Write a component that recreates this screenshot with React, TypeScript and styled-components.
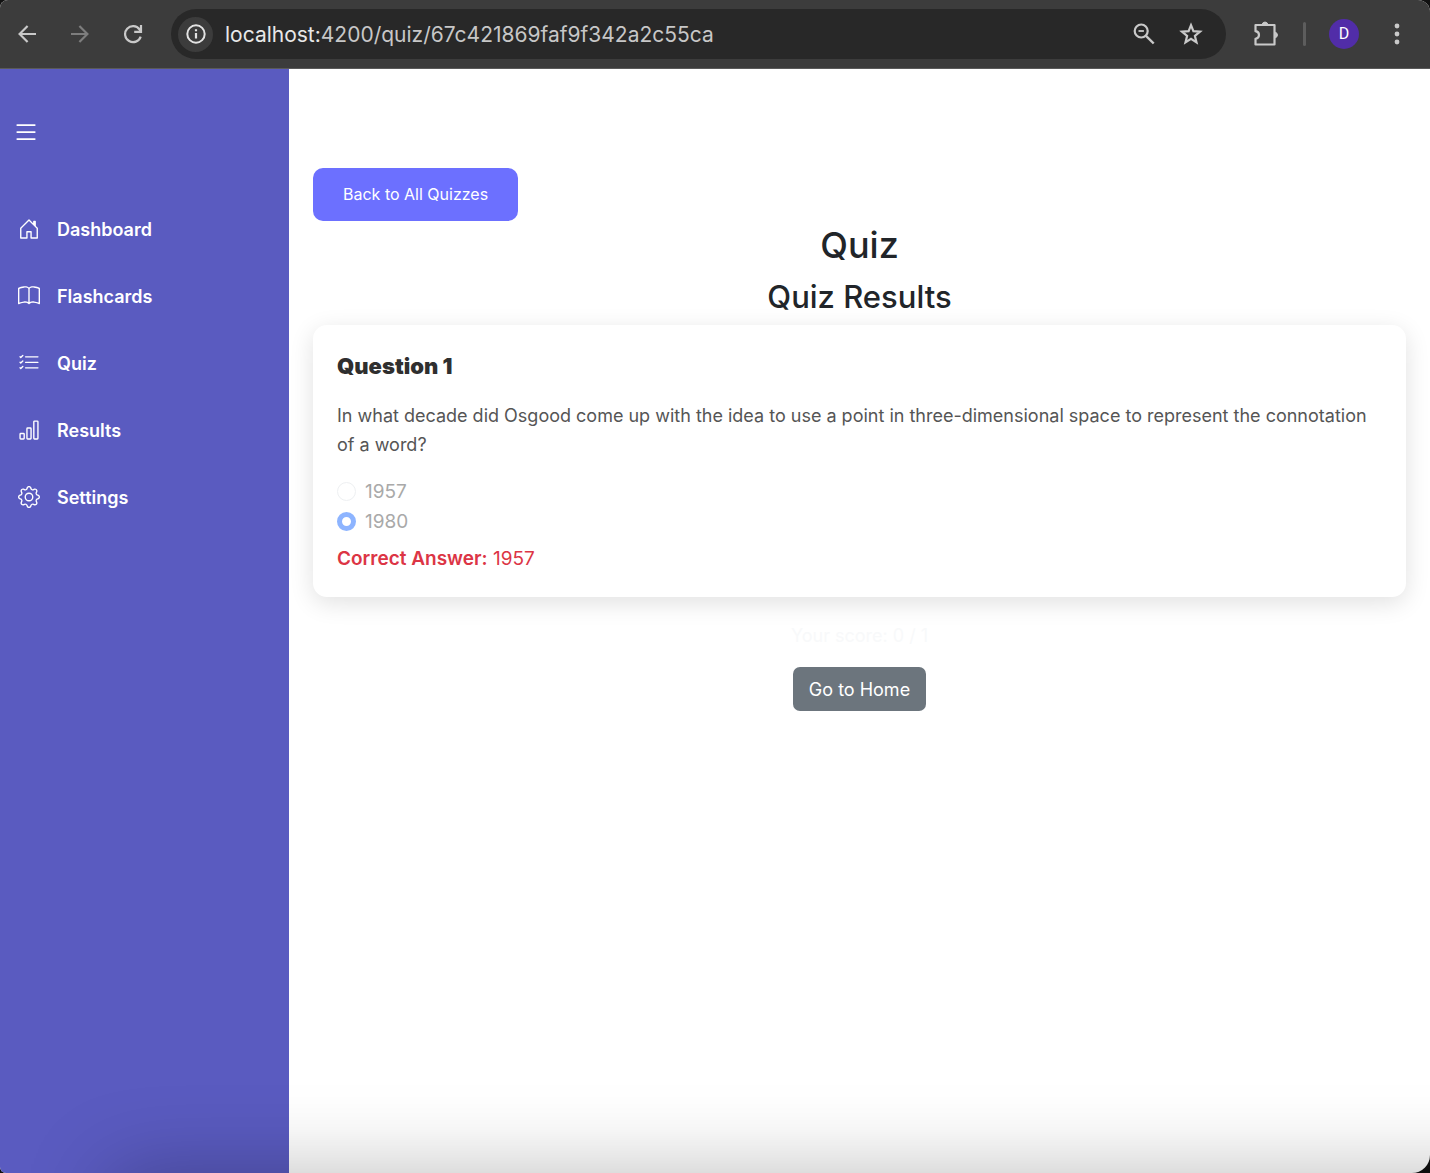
import React from "react";
import styled, { createGlobalStyle } from "styled-components";
import { BsBarChart, BsBook, BsGear, BsHouseDoor, BsList, BsListCheck } from "react-icons/bs";

const GlobalStyle = createGlobalStyle`
  *, *::before, *::after { box-sizing: border-box; }
  body {
    margin: 0;
    background: #111;
    color: #212529;
    font-family: Inter, "Liberation Sans", sans-serif;
    font-size: 18px;
    line-height: 29px;
  }
  h1, h2, h3, p { margin: 0; }
  button, input { font: inherit; }
`;

const Window = styled.div`
  display: flex;
  flex-direction: column;
  min-height: 100vh;
  overflow: hidden;
  border-radius: 8px 12px 18px 6px;
  background: #fff;
`;

const Toolbar = styled.header`
  display: flex;
  align-items: center;
  height: 69px;
  padding: 0 17px 0 11px;
  background: #3c3c3c;
  border-bottom: 1px solid #5a5a5a;
`;

const ToolButton = styled.button<{ $dim?: boolean }>`
  display: grid;
  place-items: center;
  flex: none;
  width: 32px;
  height: 32px;
  padding: 0;
  border: 0;
  background: none;
  color: ${(p) => (p.$dim ? "#7d7d7d" : "#c9c9c9")};
`;

const History = styled.div`
  display: flex;
  gap: 21px;
  margin-right: 22px;
`;

const AddressBar = styled.div`
  display: flex;
  flex: 1;
  align-items: center;
  gap: 12px;
  height: 50px;
  padding: 0 19px 0 7px;
  border-radius: 25px;
  background: #282828;
`;

const SiteInfo = styled(ToolButton)`
  width: 35px;
  height: 35px;
  border-radius: 50%;
  background: #3c3c3c;
  color: #e3e3e3;
`;

const Url = styled.div`
  flex: 1;
  color: #c7c7c7;
  font-size: 21px;
  white-space: nowrap;

  b {
    color: #e8e8e8;
    font-weight: 400;
  }
`;

const AddressActions = styled.div`
  display: flex;
  gap: 15px;
`;

const BrowserActions = styled.div`
  display: flex;
  align-items: center;
  margin-left: 23px;
`;

const Divider = styled.span`
  width: 3px;
  height: 24px;
  margin: 0 23px 0 22px;
  border-radius: 2px;
  background: #5d5d5d;
`;

const Avatar = styled.button`
  width: 30px;
  height: 30px;
  margin-right: 22px;
  padding: 0;
  border: 0;
  border-radius: 50%;
  background: #512da8;
  color: #fff;
  font-family: Roboto, sans-serif;
  font-size: 16px;
  line-height: 30px;
`;

const Body = styled.div`
  display: flex;
  flex: 1;
`;

const Sidebar = styled.aside`
  flex: none;
  width: 289px;
  padding: 49px 12px;
  background: #5a5bc0;
  color: #fff;
`;

const MenuButton = styled.button`
  display: block;
  height: 28px;
  padding: 0;
  border: 0;
  background: none;
  color: inherit;
`;

const NavList = styled.nav`
  display: flex;
  flex-direction: column;
  gap: 19px;
  margin-top: 59px;
`;

const NavItem = styled.a`
  display: flex;
  align-items: center;
  gap: 17px;
  height: 48px;
  padding-left: 6px;
  color: inherit;
  font-weight: 600;
  text-decoration: none;
`;

const Main = styled.main`
  display: flex;
  flex: 1;
  flex-direction: column;
  align-items: center;
  padding: 99px 24px 24px;
`;

const BackButton = styled.button`
  align-self: flex-start;
  height: 53px;
  padding: 0 30px;
  border: 0;
  border-radius: 10px;
  background: #6c70ff;
  color: #fff;
  font-size: 16px;
`;

const Title = styled.h1`
  margin-top: 1px;
  font-size: 36px;
  font-weight: 500;
  line-height: 46px;
`;

const Subtitle = styled.h2`
  margin-top: 9px;
  font-size: 31px;
  font-weight: 500;
  line-height: 40px;
`;

const Card = styled.section`
  width: 100%;
  margin-top: 8px;
  padding: 24px;
  border-radius: 14px;
  background: #fff;
  box-shadow: 0 6px 24px rgba(0, 0, 0, 0.12);
`;

const CardTitle = styled.h3`
  margin-top: 1px;
  color: #2f2f2f;
  font-size: 22px;
  font-weight: 900;
  line-height: 32px;
`;

const Question = styled.p`
  margin: 19px 0 17px;
  color: #555;
`;

const Options = styled.div`
  display: flex;
  flex-direction: column;
`;

const OptionRow = styled.div`
  display: flex;
  align-items: center;
  gap: 9px;
  height: 30px;
  color: #a9a9a9;
  font-size: 19px;
`;

const Radio = styled.input`
  appearance: none;
  width: 19px;
  height: 19px;
  margin: 0;
  border: 1px solid #dee2e6;
  border-radius: 50%;
  background: #fff;
  opacity: 0.5;

  &:checked {
    border: 5px solid #1d6cff;
  }
`;

const CorrectAnswer = styled.p`
  margin-top: 8px;
  color: #dc3545;
  font-size: 19px;

  strong { font-weight: 600; }
`;

const Score = styled.p`
  margin-top: 24px;
  color: #f8f9fa;
`;

const HomeButton = styled.button`
  height: 44px;
  margin-top: 17px;
  padding: 0 16px;
  border: 0;
  border-radius: 7px;
  background: #6c757d;
  color: #fff;
`;

const BottomShade = styled.div`
  position: fixed;
  top: 100%;
  right: -200px;
  left: 110px;
  height: 200px;
  box-shadow: 0 0 84px rgba(0, 0, 0, 0.27);
  pointer-events: none;
`;

const stroke = {
  fill: "none",
  stroke: "currentColor",
  strokeWidth: 2.2,
} as const;

const BackIcon = () => (
  <svg width="18" height="18" viewBox="0 0 18 18" {...stroke}>
    <path d="M18 9H1.8M9.6 1 1.6 9l8 8" />
  </svg>
);

const ForwardIcon = () => (
  <svg width="18" height="18" viewBox="0 0 18 18" {...stroke}>
    <path d="M0 9h16.2M8.4 1l8 8-8 8" />
  </svg>
);

const ReloadIcon = () => (
  <svg width="20" height="20" viewBox="0 0 20 20" {...stroke}>
    <path d="M17.7 12.6A8 8 0 1 1 16.6 5.500L18 7.200M18 1v6.800h-6.800" />
  </svg>
);

const InfoIcon = () => (
  <svg width="20" height="20" viewBox="0 0 20 20" {...stroke}>
    <circle cx="10" cy="10" r="8.700" strokeWidth="2" />
    <path d="M10 9v5.600M10 5.200v2.100" />
  </svg>
);

const ZoomOutIcon = () => (
  <svg width="22" height="22" viewBox="0 0 22 22" {...stroke}>
    <circle cx="8.200" cy="8" r="6.500" />
    <path d="M13 12.800 20.700 20.500" strokeWidth="2.400" />
    <path d="M5.500 8h5.400" strokeWidth="1.800" />
  </svg>
);

const StarIcon = () => (
  <svg width="24" height="24" viewBox="0 0 24 24" {...stroke}>
    <path d="m12 3.200 2.400 6 6.600.5-5.100 4.200 1.600 6.500L12 16.900l-5.500 3.500 1.600-6.500L3 9.700l6.600-.5z" />
  </svg>
);

const PuzzleIcon = () => (
  <svg width="26" height="26" viewBox="0 0 26 26" {...stroke} strokeLinejoin="round">
    <path d="M3.500 4h19v19.500h-19v-5.700c2.200-.4 3.500-1.800 3.500-3.800s-1.300-3.400-3.500-3.800z" />
    <path d="M10.200 3.200a2.900 2.900 0 0 1 5.600 0zM23.300 11.200a2.900 2.900 0 0 1 0 5.600z" fill="currentColor" strokeWidth="1" />
  </svg>
);

const MoreIcon = () => (
  <svg width="6" height="22" viewBox="0 0 6 22" fill="currentColor">
    <circle cx="3" cy="3" r="2.400" />
    <circle cx="3" cy="11" r="2.400" />
    <circle cx="3" cy="19" r="2.400" />
  </svg>
);

const navItems = [
  { label: "Dashboard", Icon: BsHouseDoor },
  { label: "Flashcards", Icon: BsBook },
  { label: "Quiz", Icon: BsListCheck },
  { label: "Results", Icon: BsBarChart },
  { label: "Settings", Icon: BsGear },
];

const answers = ["1957", "1980"];

export default function App() {
  return (
    <>
      <GlobalStyle />
      <Window>
        <Toolbar>
          <History>
            <ToolButton aria-label="Back"><BackIcon /></ToolButton>
            <ToolButton aria-label="Forward" $dim><ForwardIcon /></ToolButton>
            <ToolButton aria-label="Reload"><ReloadIcon /></ToolButton>
          </History>
          <AddressBar>
            <SiteInfo aria-label="Site information"><InfoIcon /></SiteInfo>
            <Url><b>localhost:</b>4200/quiz/67c421869faf9f342a2c55ca</Url>
            <AddressActions>
              <ToolButton aria-label="Zoom"><ZoomOutIcon /></ToolButton>
              <ToolButton aria-label="Bookmark"><StarIcon /></ToolButton>
            </AddressActions>
          </AddressBar>
          <BrowserActions>
            <ToolButton aria-label="Extensions"><PuzzleIcon /></ToolButton>
            <Divider />
            <Avatar aria-label="Profile">D</Avatar>
            <ToolButton aria-label="More"><MoreIcon /></ToolButton>
          </BrowserActions>
        </Toolbar>
        <Body>
          <Sidebar>
            <MenuButton aria-label="Toggle menu"><BsList size={28} /></MenuButton>
            <NavList>
              {navItems.map(({ label, Icon }) => (
                <NavItem href="#" key={label}>
                  <Icon size={22} />
                  {label}
                </NavItem>
              ))}
            </NavList>
          </Sidebar>
          <Main>
            <BackButton>Back to All Quizzes</BackButton>
            <Title>Quiz</Title>
            <Subtitle>Quiz Results</Subtitle>
            <Card>
              <CardTitle>Question 1</CardTitle>
              <Question>
                In what decade did Osgood come up with the idea to use a point in
                three-dimensional space to represent the connotation of a word?
              </Question>
              <Options>
                {answers.map((answer) => (
                  <OptionRow key={answer}>
                    <Radio
                      type="radio"
                      id={`answer-${answer}`}
                      name="question-1"
                      defaultChecked={answer === "1980"}
                      disabled
                    />
                    <label htmlFor={`answer-${answer}`}>{answer}</label>
                  </OptionRow>
                ))}
              </Options>
              <CorrectAnswer><strong>Correct Answer:</strong> 1957</CorrectAnswer>
            </Card>
            <Score>Your score: 0 / 1</Score>
            <HomeButton>Go to Home</HomeButton>
          </Main>
        </Body>
        <BottomShade />
      </Window>
    </>
  );
}
